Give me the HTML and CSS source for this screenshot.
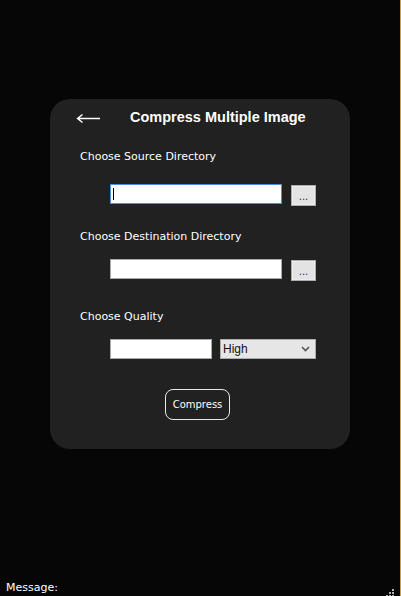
FILE: index.html
```html
<!DOCTYPE html>
<html lang="en">
<head>
<meta charset="utf-8">
<title>Compress Multiple Image</title>
<link rel="stylesheet" href="styles.css">
</head>
<body>
<main class="app">
  <section class="card">
    <header class="card-head">
      <svg class="back" width="24" height="11" viewBox="0 0 24 11" aria-label="Back">
        <path d="M1.5 5.5H24M6.5 1.5L1.5 5.5L6.5 9.5" fill="none" stroke="#fff" stroke-width="1.4"/>
      </svg>
      <h1 class="title">Compress Multiple Image</h1>
    </header>

    <div class="label label-first">Choose Source Directory</div>
    <div class="row row-first">
      <div class="field field-wide field-focus"><span class="caret"></span></div>
      <div class="browse">...</div>
    </div>

    <div class="label label-second">Choose Destination Directory</div>
    <div class="row">
      <div class="field field-wide"></div>
      <div class="browse">...</div>
    </div>

    <div class="label label-third">Choose Quality</div>
    <div class="row row-quality">
      <div class="field field-short"></div>
      <div class="select">
        <span>High</span>
        <svg width="9" height="6" viewBox="0 0 9 6"><path d="M1 1L4.5 4.5L8 1" fill="none" stroke="#555" stroke-width="1.6"/></svg>
      </div>
    </div>

    <div class="actions">
      <div class="compress">Compress</div>
    </div>
  </section>

  <footer class="status">
    <span class="message">Message:</span>
    <svg class="grip" width="11" height="9" viewBox="0 0 11 9">
      <rect x="7" y="0" width="2" height="2" fill="#b4b4b4"/>
      <rect x="4" y="3" width="2" height="2" fill="#b4b4b4"/>
      <rect x="7" y="3" width="2" height="2" fill="#b4b4b4"/>
      <rect x="1" y="6" width="2" height="2" fill="#b4b4b4"/>
      <rect x="4" y="6" width="2" height="2" fill="#b4b4b4"/>
      <rect x="7" y="6" width="2" height="2" fill="#b4b4b4"/>
    </svg>
  </footer>
</main>
</body>
</html>
```

FILE: styles.css
```css
html, body {
  margin: 0;
  padding: 0;
  background: #060606;
}

.app {
  width: 400px;
  height: 596px;
  border-right: 1px solid #c9a251;
  display: flex;
  flex-direction: column;
  overflow: hidden;
  font-family: "DejaVu Sans", "Liberation Sans", sans-serif;
  color: #fff;
}

.card {
  margin: 99px 0 0 50px;
  width: 300px;
  height: 350px;
  box-sizing: border-box;
  background: #212121;
  border-radius: 20px;
  display: flex;
  flex-direction: column;
}

.card-head {
  height: 36px;
  display: flex;
  align-items: center;
  padding-left: 26px;
}

.back {
  display: block;
  margin-top: 2px;
}

.title {
  margin: 0 0 1px 30px;
  font-family: "Liberation Sans", "DejaVu Sans", sans-serif;
  font-size: 14.5px;
  font-weight: bold;
  color: #fff;
  letter-spacing: 0;
}

.label {
  padding-left: 30px;
  font-size: 11px;
  line-height: 16px;
  color: #fff;
}

.label-first { margin-top: 14px; }
.label-second { margin-top: 23px; }
.label-third { margin-top: 28px; }

.row {
  display: flex;
  align-items: flex-start;
  padding-left: 60px;
  margin-top: 14px;
  height: 22px;
}

.row-first { margin-top: 19px; }

.row-quality { height: 20px; }

.field {
  box-sizing: border-box;
  height: 20px;
  background: #fff;
  border: 1px solid #a9a9a9;
  display: flex;
  align-items: center;
}

.field-wide { width: 172px; }
.field-short { width: 102px; }

.field-focus { border-color: #4a8fdc; }

.caret {
  display: block;
  width: 1px;
  height: 12px;
  margin-left: 2px;
  background: #000;
}

.browse {
  box-sizing: border-box;
  width: 25px;
  height: 21px;
  margin: 1px 0 0 9px;
  background: #e3e3e3;
  border: 1px solid #adadad;
  box-shadow: inset 0 0 0 1px #ececec;
  color: #2a2a6a;
  font-size: 10px;
  display: flex;
  justify-content: center;
  align-items: flex-end;
  padding-bottom: 3px;
  line-height: 10px;
}

.select {
  box-sizing: border-box;
  width: 96px;
  height: 20px;
  margin-left: 8px;
  background: #e6e6e6;
  border: 1px solid #acacac;
  display: flex;
  align-items: center;
  justify-content: space-between;
  padding: 0 5px 0 2px;
  font-family: "Liberation Sans", sans-serif;
  font-size: 12px;
  color: #111;
}

.actions {
  display: flex;
  justify-content: center;
  margin-top: 30px;
  padding-right: 5px;
}

.compress {
  box-sizing: border-box;
  width: 65px;
  height: 31px;
  border: 1px solid #e8e8e8;
  border-radius: 8px;
  display: flex;
  align-items: center;
  justify-content: center;
  font-size: 10px;
  color: #fff;
}

.status {
  margin-top: auto;
  height: 15px;
  display: flex;
  justify-content: space-between;
  align-items: flex-end;
  padding: 0 4px 0 6px;
}

.message {
  font-size: 11px;
  line-height: 14px;
  height: 15px;
  color: #fff;
}

.grip {
  display: block;
  margin-bottom: -2px;
}
```
